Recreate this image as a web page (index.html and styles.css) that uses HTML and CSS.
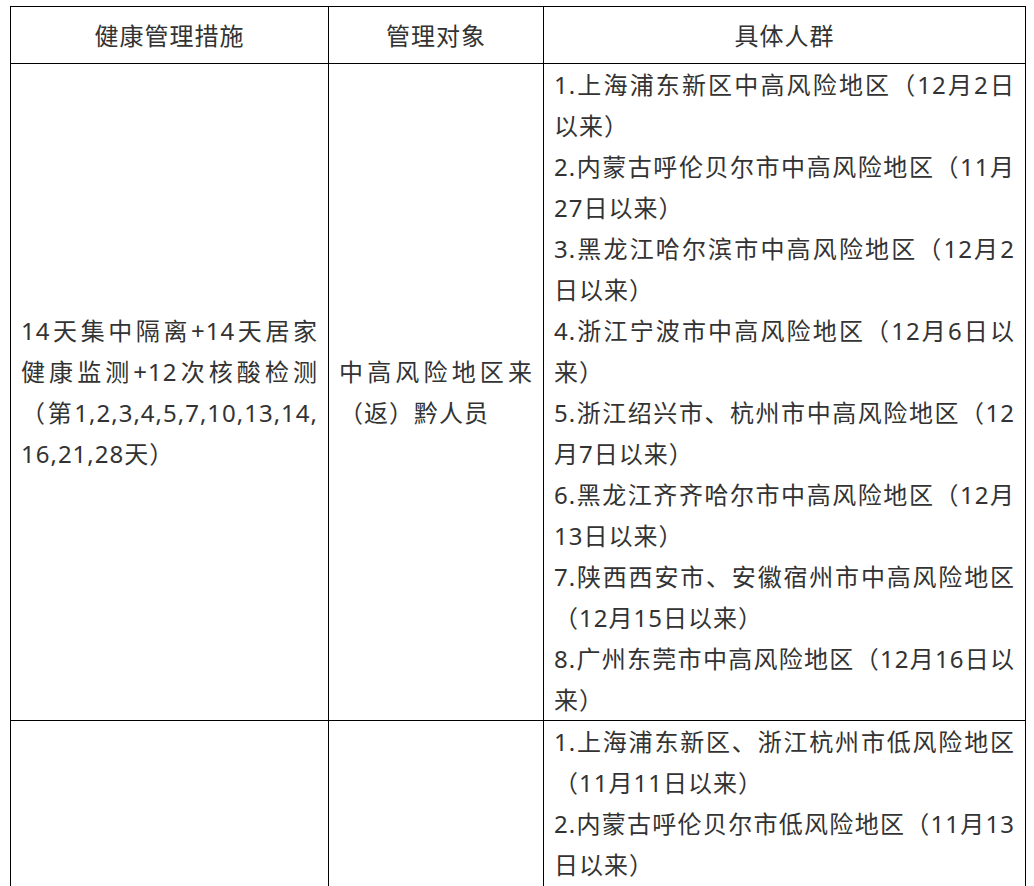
FILE: index.html
```html
<!DOCTYPE html>
<html lang="zh-CN">
<head>
<meta charset="utf-8">
<title>健康管理措施</title>
<link rel="stylesheet" href="styles.css">
</head>
<body>
<div class="page">
  <table class="policy">
    <colgroup>
      <col class="col-measure">
      <col class="col-target">
      <col class="col-people">
    </colgroup>
    <thead>
      <tr>
        <th>健康管理措施</th>
        <th>管理对象</th>
        <th>具体人群</th>
      </tr>
    </thead>
    <tbody>
      <tr>
        <td class="mid">
          <p class="para"><span class="fill">14天集中隔离+14天居家</span><span class="fill">健康监测+12次核酸检测</span><span class="fill">（第1,2,3,4,5,7,10,13,14,</span>16,21,28天）</p>
        </td>
        <td class="mid">
          <p class="para"><span class="fill">中高风险地区来</span>（返）黔人员</p>
        </td>
        <td>
          <p class="para"><span class="fill">1.上海浦东新区中高风险地区（12月2日</span>以来）</p>
          <p class="para"><span class="fill">2.内蒙古呼伦贝尔市中高风险地区（11月</span>27日以来）</p>
          <p class="para"><span class="fill">3.黑龙江哈尔滨市中高风险地区（12月2</span>日以来）</p>
          <p class="para"><span class="fill">4.浙江宁波市中高风险地区（12月6日以</span>来）</p>
          <p class="para"><span class="fill">5.浙江绍兴市、杭州市中高风险地区（12</span>月7日以来）</p>
          <p class="para"><span class="fill">6.黑龙江齐齐哈尔市中高风险地区（12月</span>13日以来）</p>
          <p class="para"><span class="fill">7.陕西西安市、安徽宿州市中高风险地区</span>（12月15日以来）</p>
          <p class="para"><span class="fill">8.广州东莞市中高风险地区（12月16日以</span>来）</p>
        </td>
      </tr>
      <tr class="last-row">
        <td class="mid"></td>
        <td class="mid"></td>
        <td>
          <p class="para"><span class="fill">1.上海浦东新区、浙江杭州市低风险地区</span>（11月11日以来）</p>
          <p class="para"><span class="fill">2.内蒙古呼伦贝尔市低风险地区（11月13</span>日以来）</p>
        </td>
      </tr>
    </tbody>
  </table>
</div>
</body>
</html>
```

FILE: styles.css
```css
html {
  overflow: hidden;
}

body {
  margin: 0;
  background: #ffffff;
}

.page {
  padding: 6px 0 0 10px;
}

.policy {
  border-collapse: collapse;
  table-layout: fixed;
  width: 1015px;
  font-family: "Noto Sans", "Noto Sans CJK SC", sans-serif;
  font-size: 24px;
  letter-spacing: 1px;
  line-height: 41px;
  color: #333333;
}

.col-measure { width: 318px; }
.col-target { width: 215px; }
.col-people { width: 482px; }

.policy th,
.policy td {
  border: 1px solid #000000;
  padding: 0 10px;
  vertical-align: top;
  text-align: justify;
}

.policy th {
  font-weight: normal;
  text-align: center;
  padding: 8px 10px 7px;
}

.policy td.mid {
  vertical-align: middle;
}

.policy .last-row td {
  padding-bottom: 24px;
}

.para {
  margin: 0;
  text-align: justify;
}

.fill {
  display: block;
  text-align: justify;
  text-align-last: justify;
}
```
